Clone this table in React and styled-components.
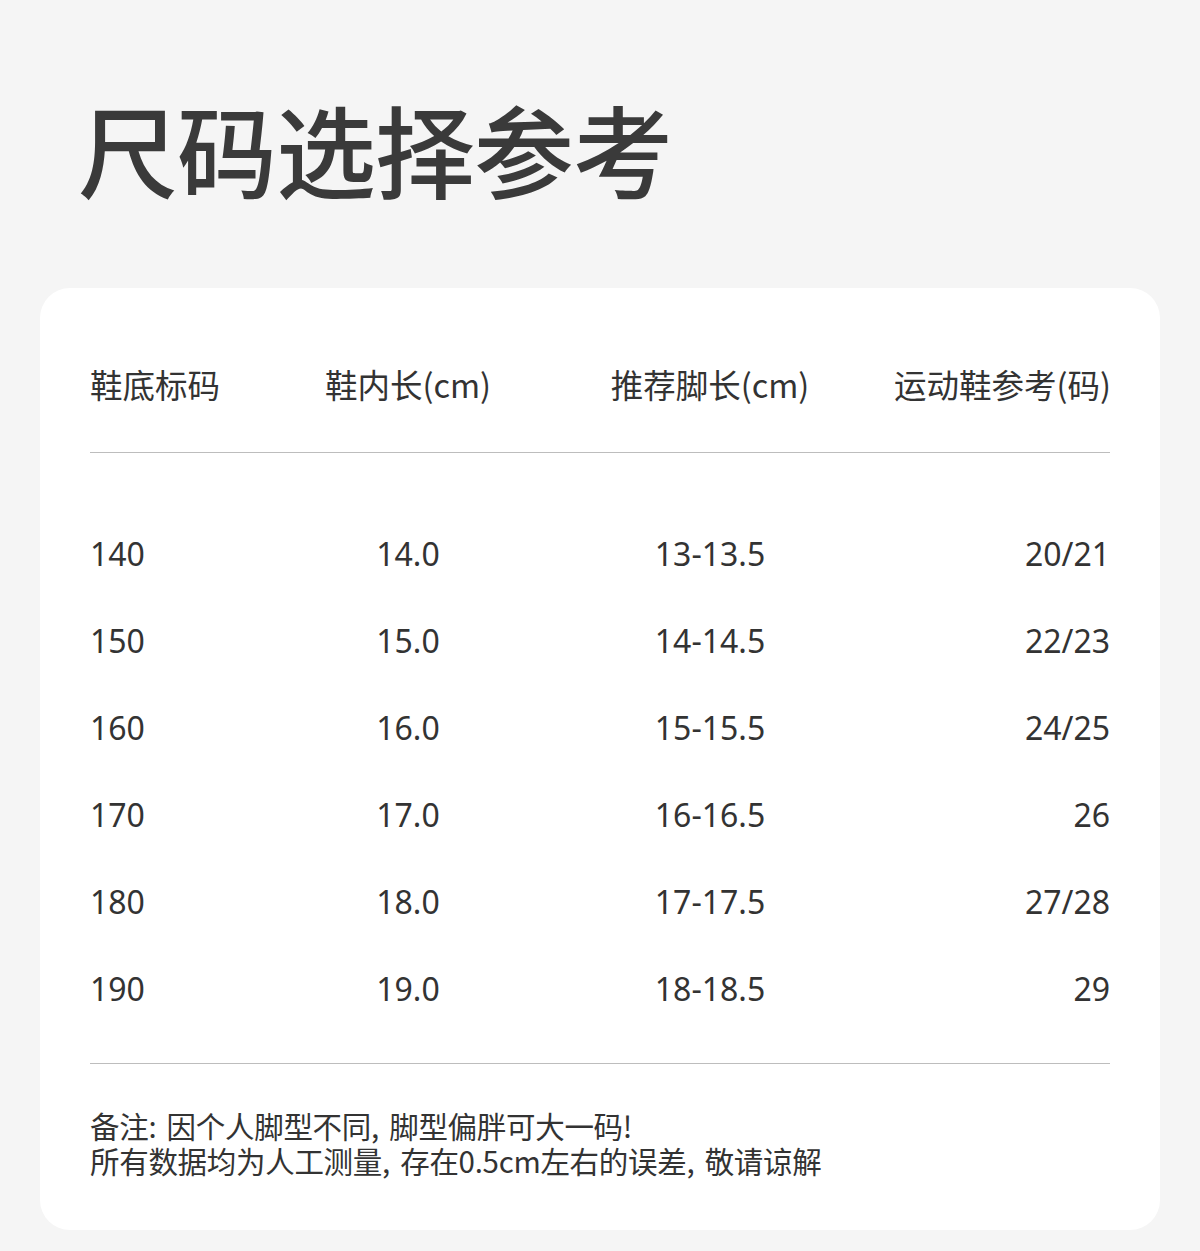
import React from "react";
import styled, { createGlobalStyle } from "styled-components";

const Global = createGlobalStyle`
  html, body { margin: 0; padding: 0; background: #f5f5f5; }
  body {
    font-family: "Noto Sans", "Noto Sans CJK SC", sans-serif;
    color: #333;
  }
`;

const Page = styled.div`
  width: 1200px;
  height: 1251px;
  box-sizing: border-box;
  padding: 98px 40px 0;
  background: #f5f5f5;
`;

const Title = styled.h1`
  margin: 0 0 90px 38px;
  font-family: "Noto Sans CJK SC", sans-serif;
  font-size: 100px;
  line-height: 100px;
  font-weight: 500;
  color: #3a3a3a;
  letter-spacing: -1px;
`;

const Card = styled.div`
  background: #fff;
  border-radius: 30px;
  padding: 0 50px;
  box-sizing: border-box;
  height: 942px;
`;

const Grid = styled.div`
  display: grid;
  grid-template-columns: 200px 236px 368px 1fr;
  align-items: center;
`;

const HeaderRow = styled(Grid)`
  padding: 78px 0 50px;
  border-bottom: 1px solid #bdbdbd;
`;

const Body = styled.div`
  padding: 57px 0 31px;
  border-bottom: 1px solid #bdbdbd;
`;

const Row = styled(Grid)`
  height: 87px;
`;

const Cell = styled.div`
  text-align: ${(p) => p.$align || "left"};
  font-size: ${(p) => (p.$head ? "32.5px" : "32px")};
  line-height: 36px;
  color: #333;
  white-space: nowrap;
  padding-right: ${(p) => (p.$head && p.$align === "right" ? "2px" : "0")};
  font-family: ${(p) =>
    p.$head
      ? '"Noto Sans CJK SC", sans-serif'
      : '"Noto Sans", "Noto Sans CJK SC", sans-serif'};
`;

const Notes = styled.div`
  padding-top: 44px;
  font-size: 29.5px;
  line-height: 35px;
  color: #333;
  font-family: "Noto Sans CJK SC", sans-serif;
  letter-spacing: -0.3px;
  word-spacing: 4px;
`;

const NoteLine = styled.p`
  margin: 0;
`;

const aligns = ["left", "center", "center", "right"];
const headers = ["鞋底标码", "鞋内长(cm)", "推荐脚长(cm)", "运动鞋参考(码)"];
const rows = [
  ["140", "14.0", "13-13.5", "20/21"],
  ["150", "15.0", "14-14.5", "22/23"],
  ["160", "16.0", "15-15.5", "24/25"],
  ["170", "17.0", "16-16.5", "26"],
  ["180", "18.0", "17-17.5", "27/28"],
  ["190", "19.0", "18-18.5", "29"],
];

export default function App() {
  return (
    <Page>
      <Global />
      <Title>尺码选择参考</Title>
      <Card>
        <HeaderRow>
          {headers.map((h, i) => (
            <Cell key={h} $head $align={aligns[i]}>
              {h}
            </Cell>
          ))}
        </HeaderRow>
        <Body>
          {rows.map((r) => (
            <Row key={r[0]}>
              {r.map((v, i) => (
                <Cell key={i} $align={aligns[i]}>
                  {v}
                </Cell>
              ))}
            </Row>
          ))}
        </Body>
        <Notes>
          <NoteLine>备注: 因个人脚型不同, 脚型偏胖可大一码!</NoteLine>
          <NoteLine>所有数据均为人工测量, 存在0.5cm左右的误差, 敬请谅解</NoteLine>
        </Notes>
      </Card>
    </Page>
  );
}
